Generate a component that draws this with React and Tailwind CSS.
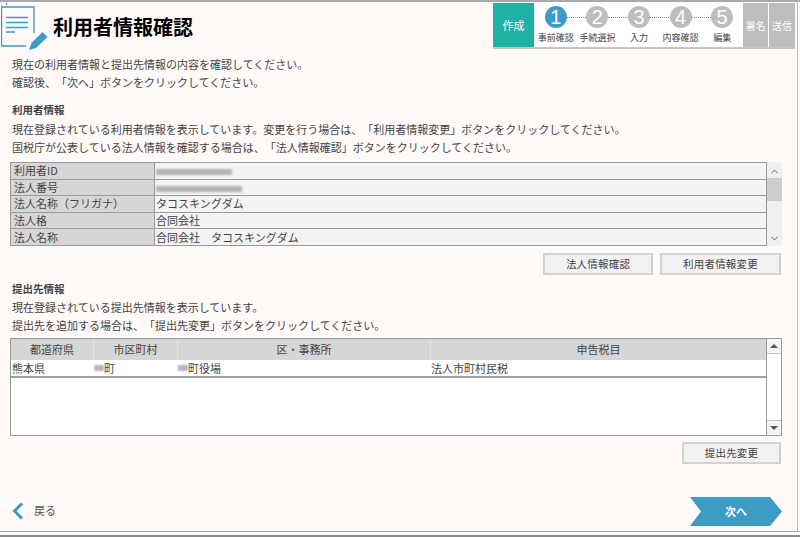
import React from "react";
import { ChevronUp, ChevronDown } from "lucide-react";

const userRows = [
  { label: "利用者ID", blur: "w-[76px]" },
  { label: "法人番号", blur: "w-[86px]" },
  { label: "法人名称\uFF08フリガナ\uFF09", value: "タコスキングダム" },
  { label: "法人格", value: "合同会社" },
  { label: "法人名称", value: "合同会社\u3000タコスキングダム" },
];

const steps = [
  { n: 1, label: "事前確認", active: true },
  { n: 2, label: "手続選択" },
  { n: 3, label: "入力" },
  { n: 4, label: "内容確認" },
  { n: 5, label: "編集" },
];

const Blur = ({ className }) => (
  <span className={`inline-block h-[6px] bg-[#b4b4b4] blur-[1px] ${className}`} />
);

const PageIcon = () => (
  <svg width="50" height="52" viewBox="0 0 50 52" fill="none">
    <path d="M0.5 4H33V30M0.5 4V43H25" stroke="#3d9cc6" strokeWidth="1.4" />
    <path d="M1 4a3 3 0 1 1 4.5 -2" stroke="#3d9cc6" strokeWidth="1.1" />
    <path d="M5 14.5H27M5 19.5H27M5 24.5H27M5 29H14" stroke="#3d9cc6" strokeWidth="1.5" />
    <path d="M28 47L30.5 40L41.5 29L46.5 34L35 45Z" fill="#3d9cc6" />
  </svg>
);

const Stepper = () => (
  <div className="w-[302px] h-[46px] flex border-b-2 border-[#c9c5c5]">
    <div className="w-[41px] bg-[#20b0a6] text-white text-[11px] flex items-center justify-center">作成</div>
    <div className="w-[209px] bg-white flex pl-[1px]">
      {steps.map((s, i) => (
        <div key={s.n} className="w-[42px] flex flex-col items-center relative">
          {i < 4 && <div className="absolute left-[31px] top-[14px] w-[22px] border-t border-dotted border-[#888]" />}
          <div
            className={`mt-[3px] w-[22px] h-[22px] rounded-full flex items-center justify-center text-white text-[20px] leading-none font-normal ${
              s.active ? "bg-[#3d9cc6]" : "bg-[#bdbdbd]"
            }`}
            style={{ fontFamily: '"Liberation Sans", sans-serif' }}
          >
            {s.n}
          </div>
          <div className="mt-[5px] text-[9px] leading-[10px] text-[#444] whitespace-nowrap">{s.label}</div>
        </div>
      ))}
    </div>
    <div className="w-[26px] bg-[#bdbdbd] text-white text-[10px] flex items-center justify-center border-r border-white">署名</div>
    <div className="w-[26px] bg-[#bdbdbd] text-white text-[10px] flex items-center justify-center">送信</div>
  </div>
);

const GrayButton = ({ className, children }) => (
  <button className={`h-[22px] bg-[#f2f2f2] border-2 border-[#d2d2d2] text-[10.5px] text-[#444] tracking-[0.2px] leading-none ${className}`}>
    {children}
  </button>
);

export default function App() {
  return (
    <div
      className="w-[800px] h-[537px] overflow-hidden bg-[#fff9f8] flex flex-col text-[#444] text-[11px] [text-spacing-trim:space-all]"
      style={{ fontFamily: '"Noto Sans CJK JP", "Noto Sans", sans-serif' }}
    >
      <div className="h-[2px] bg-[#a9a9a9] shrink-0" />

      <div className="flex-1 flex flex-col relative min-h-0">
        <div className="absolute right-[2px] top-0 bottom-0 border-r border-[#bbb]" />
        {/* header */}
        <div className="h-[53px] flex shrink-0">
          <div className="w-[493px] shrink-0 flex items-center pl-[1px]">
            <PageIcon />
            <h1 className="ml-[2px] -mt-[4px] text-[20px] font-bold text-black leading-none">利用者情報確認</h1>
          </div>
          <div className="pt-[1px]">
            <Stepper />
          </div>
        </div>

        <div className="pl-[12px] leading-[18px]">
          <p>現在の利用者情報と提出先情報の内容を確認してください。</p>
          <p>確認後、「次へ」ボタンをクリックしてください。</p>
        </div>

        {/* user info */}
        <div className="pl-[12px] mt-[10px] leading-[18px]">
          <h2 className="font-bold text-[10.5px] mb-[1px]">利用者情報</h2>
          <p>現在登録されている利用者情報を表示しています。変更を行う場合は、「利用者情報変更」ボタンをクリックしてください。</p>
          <p>国税庁が公表している法人情報を確認する場合は、「法人情報確認」ボタンをクリックしてください。</p>
        </div>

        <div className="ml-[10px] mt-[6px] w-[772px] h-[84px] flex shrink-0">
          <div className="w-[757px] border border-[#9a9a9a] bg-[#f3f3f3] flex flex-col">
            {userRows.map((r, i) => (
              <div key={r.label} className={`flex-1 min-h-0 flex items-center leading-none ${i < 4 ? "border-b border-[#9a9a9a]" : ""}`}>
                <div className="w-[144px] h-full bg-[#d6d6d6] border-r border-[#9a9a9a] pl-[3px] flex items-center whitespace-nowrap">
                  {r.label}
                </div>
                <div className="pl-[1px] whitespace-pre">
                  {r.value ? r.value : <Blur className={r.blur} />}
                </div>
              </div>
            ))}
          </div>
          <div className="w-[15px] bg-[#f0f0f0] flex flex-col items-center">
            <ChevronUp size={11} strokeWidth={2} className="mt-[4px] text-[#555]" />
            <div className="w-full h-[23px] mt-[1px] bg-[#cdcdcd]" />
            <ChevronDown size={11} strokeWidth={2} className="mt-auto mb-[2px] text-[#555]" />
          </div>
        </div>

        <div className="ml-[543px] mt-[7px] flex gap-[7px] shrink-0">
          <GrayButton className="w-[110px]">法人情報確認</GrayButton>
          <GrayButton className="w-[121px]">利用者情報変更</GrayButton>
        </div>

        {/* destination */}
        <div className="pl-[12px] mt-[5px] leading-[18px]">
          <h2 className="font-bold text-[10.5px]">提出先情報</h2>
          <p>現在登録されている提出先情報を表示しています。</p>
          <p>提出先を追加する場合は、「提出先変更」ボタンをクリックしてください。</p>
        </div>

        <div className="ml-[10px] mt-[4px] w-[772px] h-[98px] flex shrink-0 border border-[#9a9a9a] bg-white">
          <div className="flex-1 flex flex-col">
            <div className="h-[21px] flex bg-[#d6d6d6] text-center items-stretch">
              <div className="w-[83px] border-r border-[#e4e4e4] flex items-center justify-center">都道府県</div>
              <div className="w-[84px] border-r border-[#e4e4e4] flex items-center justify-center">市区町村</div>
              <div className="w-[253px] border-r border-[#e4e4e4] flex items-center justify-center">区・事務所</div>
              <div className="flex-1 flex items-center justify-center">申告税目</div>
            </div>
            <div className="h-[18px] flex items-center border-b-2 border-[#a0a0a0]">
              <div className="w-[83px] pl-[1px]">熊本県</div>
              <div className="w-[84px] flex items-center">
                <Blur className="w-[10px]" />
                <span>町</span>
              </div>
              <div className="w-[253px] flex items-center">
                <Blur className="w-[10px]" />
                <span>町役場</span>
              </div>
              <div className="flex-1">法人市町村民税</div>
            </div>
          </div>
          <div className="w-[15px] border-l border-[#9a9a9a] flex flex-col">
            <div className="h-[15px] border-b border-[#c4c4c4] bg-[#f4f4f4] flex items-center justify-center">
              <div className="border-x-[4px] border-x-transparent border-b-[4px] border-b-[#555]" />
            </div>
            <div className="flex-1" />
            <div className="h-[15px] border-t border-[#c4c4c4] bg-[#f4f4f4] flex items-center justify-center">
              <div className="border-x-[4px] border-x-transparent border-t-[4px] border-t-[#555]" />
            </div>
          </div>
        </div>

        <div className="ml-[682px] mt-[6px] shrink-0">
          <GrayButton className="w-[99px]">提出先変更</GrayButton>
        </div>

        {/* footer nav */}
        <div className="mt-auto mb-[5px] flex items-center justify-between pl-[12px] pr-[18px]">
          <div className="flex items-center gap-[10px] mb-[2px]">
            <svg width="12" height="18" viewBox="0 0 12 18" fill="none">
              <path d="M10 1.5L2.5 9L10 16.5" stroke="#3d9cc6" strokeWidth="3" />
            </svg>
            <span className="text-[#555] text-[11px]">戻る</span>
          </div>
          <div className="relative w-[92px] h-[29px] flex items-center justify-center">
            <svg className="absolute inset-0" width="92" height="29" viewBox="0 0 92 29">
              <path d="M0 0H80L92 14.5L80 29H0L11 14.5Z" fill="#3d9cc6" />
            </svg>
            <span className="relative text-white font-bold text-[11px]">次へ</span>
          </div>
        </div>
      </div>

      <div className="h-[1px] bg-[#a3a3a3] shrink-0" />
      <div className="h-[3px] bg-white shrink-0" />
      <div className="h-[2px] bg-[#8a8a8a] shrink-0" />
    </div>
  );
}
